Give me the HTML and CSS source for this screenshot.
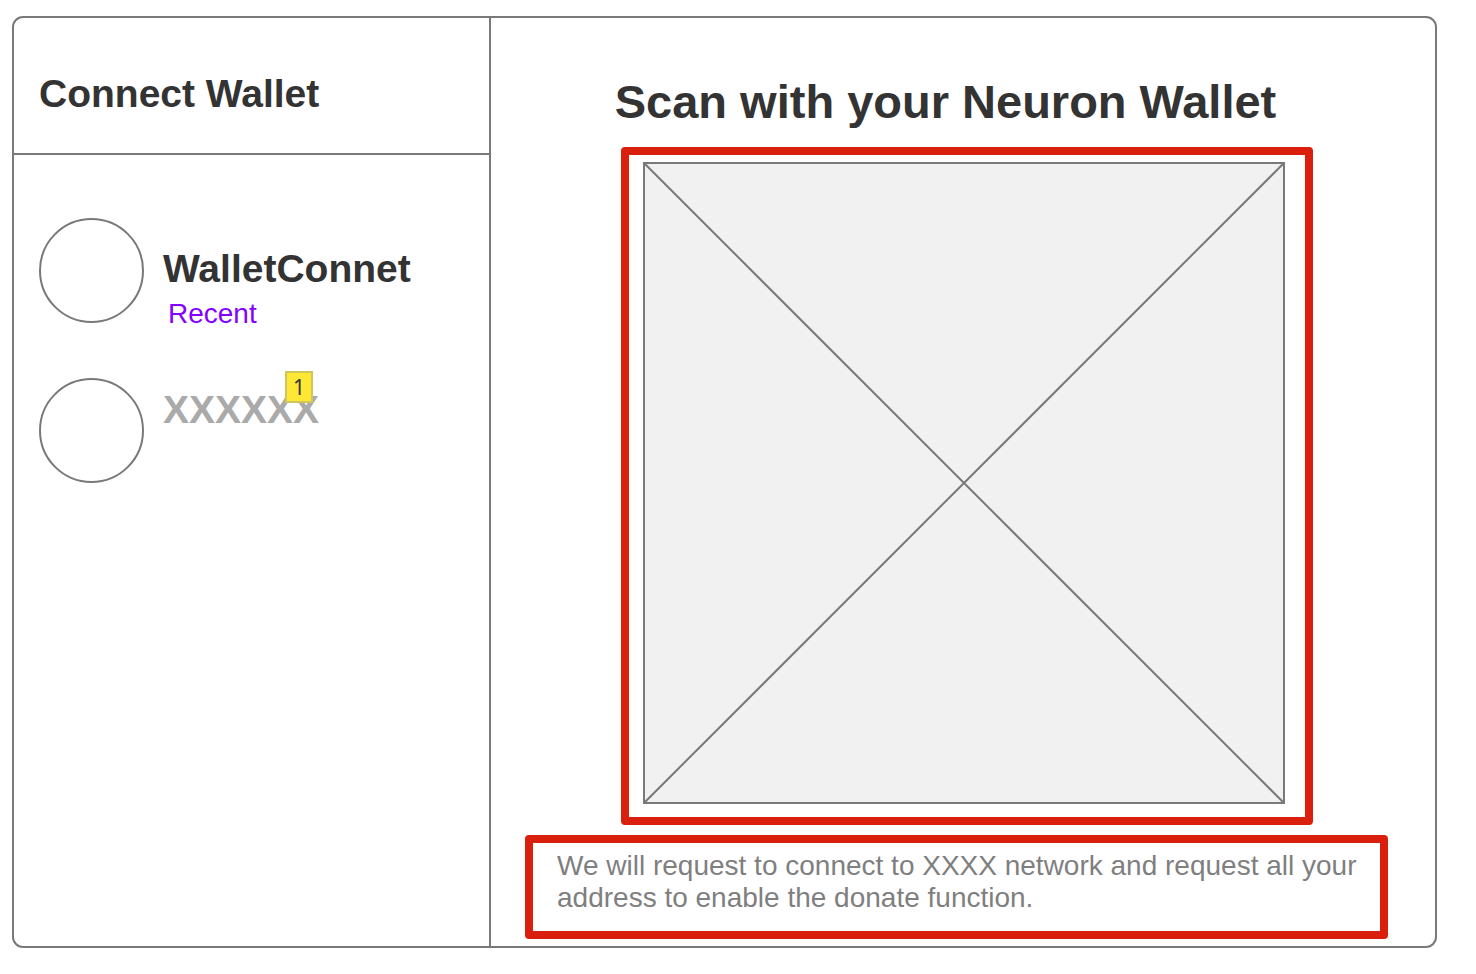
FILE: index.html
```html
<!DOCTYPE html>
<html lang="en">
<head>
<meta charset="utf-8">
<meta name="viewport" content="width=device-width, initial-scale=1">
<title>Connect Wallet</title>
<link rel="stylesheet" href="styles.css">
</head>
<body>
<div class="dialog">
  <aside class="sidebar">
    <header class="sidebar-header">
      <h1 class="heading">Connect Wallet</h1>
    </header>
    <div class="wallets">
      <button type="button" class="wallet">
        <span class="avatar"></span>
        <span class="wallet-text wallet-text-detailed">
          <span class="wallet-name">WalletConnet</span>
          <span class="wallet-tag">Recent</span>
        </span>
      </button>
      <button type="button" class="wallet">
        <span class="avatar"></span>
        <span class="wallet-text">
          <span class="wallet-name wallet-name-muted">XXXXXX<span class="note-badge">1</span></span>
        </span>
      </button>
    </div>
  </aside>
  <main class="scan">
    <h2 class="scan-title">Scan with your Neuron Wallet</h2>
    <div class="callout code-frame">
      <svg class="code" viewBox="0 0 642 642" role="img" aria-label="QR code placeholder">
        <rect x="1" y="1" width="640" height="640" fill="#f1f1f1" stroke="#797979" stroke-width="2"/>
        <path d="M1 1L641 641M641 1L1 641" stroke="#797979" stroke-width="2"/>
      </svg>
    </div>
    <p class="callout message">We will request to connect to XXXX network and request all your address to enable the donate function.</p>
  </main>
</div>
</body>
</html>
```
FILE: styles.css
```css
* {
  box-sizing: border-box;
}

body {
  margin: 0;
  padding: 16px 39px 26px 12px;
  background: #fff;
  color: #333;
  font-family: "Liberation Sans", Arial, sans-serif;
}

.dialog {
  display: grid;
  grid-template-columns: 33.57% 1fr;
  border: 2px solid #797979;
  border-radius: 11px;
}

.sidebar {
  border-right: 2px solid #797979;
}

.sidebar-header {
  padding: 54px 25px 37px;
  border-bottom: 2px solid #797979;
}

.heading {
  margin: 0;
  font-size: 39px;
  line-height: 44px;
}

.wallets {
  display: flex;
  flex-direction: column;
  gap: 48px;
  padding: 63px 25px;
}

.wallet {
  display: flex;
  align-items: flex-start;
  gap: 19px;
  padding: 0;
  border: 0;
  background: none;
  color: inherit;
  font: inherit;
  text-align: left;
  cursor: pointer;
}

.avatar {
  flex: none;
  width: 105px;
  height: 105px;
  border: 2px solid #797979;
  border-radius: 50%;
}

.wallet-text {
  display: flex;
  flex-direction: column;
  align-items: flex-start;
  gap: 7px;
  padding-top: 10px;
}

.wallet-text-detailed {
  padding-top: 29px;
}

.wallet-name {
  position: relative;
  font-size: 39px;
  font-weight: bold;
  line-height: 44px;
}

.wallet-name-muted {
  color: #aaa;
}

.wallet-tag {
  padding-left: 5px;
  color: #8400ff;
  font-size: 28px;
  line-height: 32px;
}

.note-badge {
  position: absolute;
  top: -17px;
  right: 6px;
  width: 28px;
  height: 32px;
  border: 2px solid #d0c65c;
  background: #ffe835;
  color: #333;
  font: 21px/28px "Noto Sans", "Open Sans", sans-serif;
  text-align: center;
}

.scan {
  padding: 56px 47px 7px 34px;
}

.scan-title {
  margin: 0 22px 17px 0;
  font-size: 47px;
  line-height: 56px;
  text-align: center;
}

.callout {
  border: 8px solid #db1f0d;
  border-radius: 4px;
}

.code-frame {
  margin: 0 75px 10px 96px;
  padding: 7px 20px 13px 14px;
}

.code {
  display: block;
  width: 100%;
}

.message {
  margin: 0;
  padding: 7px 16px 17px 24px;
  color: #7f7f7f;
  font-size: 28px;
  line-height: 32px;
}
```
